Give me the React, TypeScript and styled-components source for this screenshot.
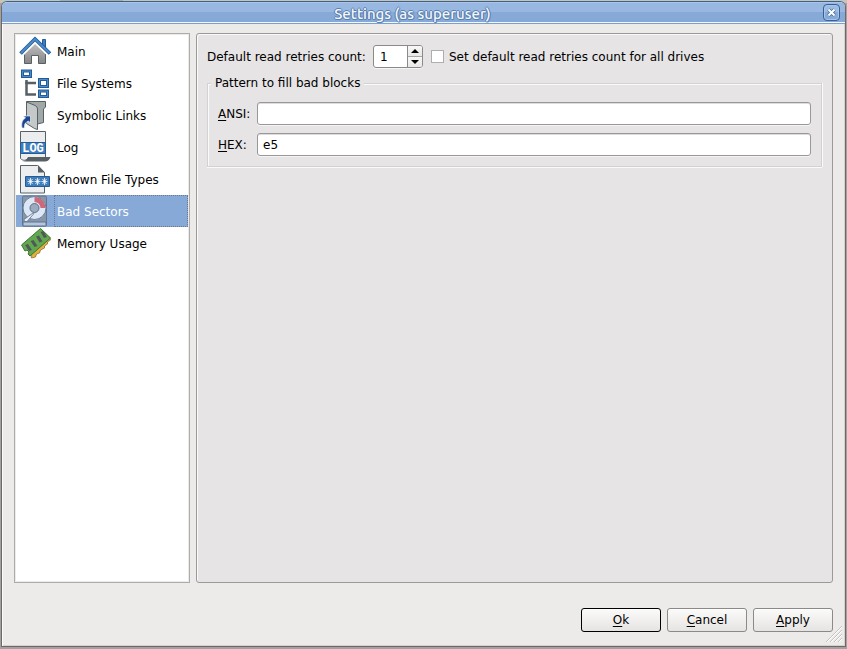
import React, { useState } from "react";
import styled, { createGlobalStyle } from "styled-components";

const GlobalStyle = createGlobalStyle`
  * { box-sizing: border-box; }
  body {
    margin: 0;
    background: #a3a2a1;
    color: #000;
    font: 12px/16px "DejaVu Sans", sans-serif;
  }
  button, input { font: inherit; color: inherit; }
`;

const Desktop = styled.div`
  display: flex;
  min-height: 100vh;
  padding: 1px 1px 2px;
  background: linear-gradient(90deg, #c4c6bb 0 60px, #a9aba6 60px 123px, #c4c6bb 123px) top / 100% 3px no-repeat, #a3a2a1;
`;

const Window = styled.div`
  position: relative;
  flex: 1;
  display: flex;
  flex-direction: column;
  min-width: 0;
  border: 1px solid #6b6a69;
  border-top-color: #3f5f86;
  border-radius: 6px 6px 0 0;
  background: #edebe9;
  box-shadow: inset 1px 0 #fbfbfb, inset -1px -1px #d4d2d0;
  overflow: hidden;
`;

const TitleBar = styled.header`
  display: flex;
  align-items: flex-start;
  height: 22px;
  padding: 2px 5px 0 0;
  background: linear-gradient(#a9c6ec 0 1px, #98b8e2 1px 10px, #86a9d8 10px 20px, #f4f7fb 20px 21px, #7b9fce 21px);
`;

const Title = styled.h1`
  flex: 1;
  margin: 0;
  text-align: center;
  font: 500 15px/20px Ubuntu, "Noto Sans", sans-serif;
  color: #f4f7fb;
  text-shadow: 1px 0 #587fae, -1px 0 #587fae, 0 1px #587fae, 0 -1px #587fae, 1px 1px #6d92c2;
`;

const CloseButton = styled.button`
  display: grid;
  place-items: center;
  width: 17px;
  height: 17px;
  padding: 0;
  border: 1px solid #385f8f;
  border-radius: 4px;
  background: linear-gradient(#9dbce4 50%, #86a9d8 50%);
  box-shadow: inset 0 0 0 1px #a9c5eb;
`;

const Content = styled.main`
  flex: 1;
  display: flex;
  gap: 6px;
  padding: 9px 12px 0;
`;

const CategoryList = styled.nav`
  flex: 0 0 176px;
  padding: 1px;
  border: 1px solid #aeacaa;
  background: #fff;
  box-shadow: inset 0 0 0 1px #edebe9;
`;

const Category = styled.button<{ $selected: boolean }>`
  display: flex;
  width: 100%;
  height: 32px;
  padding: 0;
  border: 0;
  text-align: left;
  background: ${(p) => (p.$selected ? "#86a9d8" : "transparent")};
  color: ${(p) => (p.$selected ? "#fff" : "#000")};
  outline: none;
`;

const CategoryName = styled.span<{ $selected: boolean }>`
  flex: 1;
  padding: 8px 2px 6px;
  border: 1px dotted ${(p) => (p.$selected ? "#6f7886" : "transparent")};
`;

const Icon = styled.svg`
  flex: none;
  width: 38px;
  height: 32px;
`;

const Panel = styled.section`
  flex: 1;
  min-width: 0;
  padding: 11px 10px;
  border: 1px solid #9c999a;
  border-radius: 3px;
  background: #e6e4e5;
  box-shadow: inset 1px 1px #fbfafa;
`;

const RetryRow = styled.div`
  display: flex;
  align-items: center;
`;

const SpinBox = styled.div`
  display: flex;
  width: 50px;
  height: 23px;
  margin: 0 8px 0 7px;
  border: 1px solid #8c8a89;
  border-radius: 3px;
  background: #fff;
  box-shadow: 0 1px #f6f5f5;
  overflow: hidden;
`;

const SpinInput = styled.input`
  width: 33px;
  padding: 0 6px;
  border: 0;
  outline: none;
  background: transparent;
  appearance: textfield;
  &::-webkit-inner-spin-button { appearance: none; margin: 0; }
`;

const Steppers = styled.div`
  flex: 1;
  display: flex;
  flex-direction: column;
  border-left: 1px solid #8c8a89;
`;

const Stepper = styled.button`
  flex: 1;
  display: grid;
  place-items: center;
  padding: 0;
  border: 0;
  background: linear-gradient(#f8f8f7, #e9e8e7);
  & + & { border-top: 1px solid #a9a7a6; }
`;

const CheckBox = styled.input`
  appearance: none;
  width: 13px;
  height: 13px;
  margin: 0 5px 0 0;
  border: 1px solid #b0aead;
  background: #fff;
  &:checked { background: #fff linear-gradient(#333, #333) center / 7px 7px no-repeat; }
`;

const Group = styled.fieldset`
  min-width: 0;
  margin: 7px 0 0;
  padding: 11px 10px 10px;
  border: 1px solid #d3d1d2;
  box-shadow: inset 1px 1px #fbfafa, 0 1px #fbfafa, 1px 0 #fbfafa;
`;

const Legend = styled.legend`
  margin-left: -7px;
  padding: 0 4px;
  background: #e6e4e5;
`;

const Fields = styled.div`
  display: grid;
  grid-template-columns: 39px 1fr;
  row-gap: 8px;
  align-items: center;
`;

const TextInput = styled.input`
  width: 100%;
  min-width: 0;
  height: 23px;
  padding: 0 5px;
  border: 1px solid #9a9897;
  border-radius: 3px;
  outline: none;
  background: #fff;
  box-shadow: 0 1px #f6f5f5, inset 0 1px #dedcdc;
`;

const Mnemonic = styled.u`
  text-underline-offset: 2px;
  text-decoration-thickness: 1px;
  text-decoration-skip-ink: none;
`;

const Footer = styled.footer`
  display: flex;
  justify-content: flex-end;
  gap: 6px;
  padding: 25px 12px 14px;
`;

const DialogButton = styled.button<{ $primary?: boolean }>`
  width: 80px;
  height: 24px;
  padding: 0;
  border: 1px solid ${(p) => (p.$primary ? "#000" : "#8c8a88")};
  border-radius: 3px;
  background: linear-gradient(#fbfbfa, #e6e4e2);
  box-shadow: inset 0 1px #fff;
`;

const Grip = styled.svg`
  position: absolute;
  right: 2px;
  bottom: 3px;
  width: 18px;
  height: 18px;
  pointer-events: none;
`;

const BLUE = "#3f7ebd";
const EDGE = "#245b96";
const SLATE = "#566065";

function HouseIcon() {
  return (
    <Icon viewBox="0 0 38 32" aria-hidden="true">
      <defs>
        <linearGradient id="wall" x1="0" y1="0" x2="0" y2="1">
          <stop offset="0" stopColor="#c2c2c2" />
          <stop offset="1" stopColor="#858585" />
        </linearGradient>
      </defs>
      <path d="M26.500 13V4.500h3V16z" fill={BLUE} stroke={EDGE} />
      <path d="M8.500 18 19 7.500 29.500 18v10.500h-7v-8h-7v8h-7z" fill="url(#wall)" stroke={SLATE} />
      <path d="M5 19.500 19 5.500 33.500 19.500" fill="none" stroke="#fff" strokeWidth="5" />
      <path d="M4.500 18.500 19 4 34 18.500" fill="none" stroke={EDGE} strokeWidth="3.600" />
      <path d="M5 18 19 4 33.500 18" fill="none" stroke="#4a8ccc" strokeWidth="1.800" />
    </Icon>
  );
}

function TreeIcon() {
  return (
    <Icon viewBox="0 0 38 32" aria-hidden="true">
      <path d="M20 16h-9.500v11.500H20" fill="none" stroke={SLATE} strokeWidth="2.500" />
      <path d="M10.500 13v4" stroke={SLATE} strokeWidth="2.500" />
      <g fill="#fff" stroke={EDGE} strokeWidth="3">
        <path d="M6.500 4h8v5.500h-8zM23.500 12.500h8v7h-8zM23.500 24h8v5.500h-8z" />
      </g>
      <g fill="none" stroke="#4a8ccc">
        <path d="M6.500 4h8v5.500h-8zM23.500 12.500h8v7h-8zM23.500 24h8v5.500h-8z" />
      </g>
    </Icon>
  );
}

function LinkIcon() {
  return (
    <Icon viewBox="0 0 38 32" aria-hidden="true">
      <path d="M10.500 2.500h19V8L27.500 10v13.500l-6 1.500z" fill="#a0a8a8" stroke={SLATE} />
      <path d="m10.500 3 7.500 3c3 1.500 3.500 2 3.500 5v19.500l-3-1-8-5z" fill="#c5c8c8" stroke={SLATE} />
      <path d="M6 29c-1-6 1-8.500 3.500-10L7.500 17h7v7l-2-2C9.500 23.500 8 25 8.500 29z" fill="#1d4690" stroke="#e9eef8" strokeWidth=".7" />
    </Icon>
  );
}

function LogIcon() {
  return (
    <Icon viewBox="0 0 38 32" aria-hidden="true">
      <path d="M4.500.5h25v26h-17c-2 3-5 4-8 1z" fill="#ebedee" stroke={SLATE} />
      <path d="M4.500 11.500h25v11h-25z" fill={BLUE} stroke={EDGE} />
      <path d="M12 26h22.500c-1 2.500-2 4-5 4.500H6c3 0 5-2 6-4.500z" fill={SLATE} />
      <text x="17" y="21" textAnchor="middle" fill="#fff" fontFamily="'Liberation Mono', monospace" fontWeight="700" fontSize="12">LOG</text>
    </Icon>
  );
}

function FileTypeIcon() {
  return (
    <Icon viewBox="0 0 38 32" aria-hidden="true">
      <path d="M4.500 2.500h17l7 7v20.500h-24z" fill="#ebedee" stroke={SLATE} />
      <path d="M22 2v7.500h7z" fill={SLATE} />
      <path d="M9.500 13.500h24v10h-24z" fill={BLUE} stroke={EDGE} />
      <path d="M14.500 15v7M11.500 18.500h6M12.500 16l4 5M16.500 16l-4 5M21.500 15v7M18.500 18.500h6M19.500 16l4 5M23.500 16l-4 5M28.500 15v7M25.500 18.500h6M26.500 16l4 5M30.500 16l-4 5" stroke="#fff" strokeWidth=".8" />
    </Icon>
  );
}

function DiskIcon() {
  return (
    <Icon viewBox="0 0 38 32" aria-hidden="true">
      <rect x="6.500" y="1" width="24" height="30" rx="1.500" fill="#8797a9" stroke="#61758e" />
      <path d="M7 27h23v4H7z" fill="#b4c6de" stroke="#61758e" />
      <circle cx="18.500" cy="13" r="11.500" fill="#dce7f5" stroke="#6b7f99" />
      <path d="M18.500 13V2a11 11 0 0 1 11 11z" fill="#cc6878" />
      <circle cx="18.500" cy="13" r="6" fill="#dce7f5" />
      <circle cx="18.500" cy="13" r="4.500" fill="#9baabd" stroke="#5c708a" />
      <path d="m17 18-9 6.500.5 2H11l7-8z" fill="#e9f0fa" stroke="#5c708a" strokeWidth=".8" />
    </Icon>
  );
}

function MemoryIcon() {
  return (
    <Icon viewBox="0 0 38 32" aria-hidden="true">
      <path d="m14.500 26 19-16 1 3-3 2v2l-3 2v2l-4 2-1 3-3 1-1 3-4 1z" fill="#e6ae3e" stroke="#7e642a" strokeWidth=".7" />
      <path d="m5.500 18 19-16.500 10 9.500-20.500 18-2-2 1-2-2-2-2 1z" fill="#63a850" stroke="#38752f" />
      <path d="m9 18 3-1 4 6-3 1zM14.500 14l3-1 4 6-3 1zM20 9.500l3-1 3.500 6-3 1zM24.500 5l3-1 3.500 6-3 1z" fill="#4e5a57" />
    </Icon>
  );
}

const categories = [
  { name: "Main", Glyph: HouseIcon },
  { name: "File Systems", Glyph: TreeIcon },
  { name: "Symbolic Links", Glyph: LinkIcon },
  { name: "Log", Glyph: LogIcon },
  { name: "Known File Types", Glyph: FileTypeIcon },
  { name: "Bad Sectors", Glyph: DiskIcon },
  { name: "Memory Usage", Glyph: MemoryIcon },
];

export default function App() {
  const [selected, setSelected] = useState("Bad Sectors");
  const [retries, setRetries] = useState(1);

  return (
    <Desktop>
      <GlobalStyle />
      <Window role="dialog" aria-labelledby="title">
        <TitleBar>
          <Title id="title">Settings (as superuser)</Title>
          <CloseButton aria-label="Close">
            <svg width="9" height="9" viewBox="0 0 9 9" aria-hidden="true">
              <path d="m1.500 1.500 6 6m0-6-6 6" stroke="#4a709e" strokeWidth="3.600" />
              <path d="m1.500 1.500 6 6m0-6-6 6" stroke="#fff" strokeWidth="2" />
            </svg>
          </CloseButton>
        </TitleBar>
        <Content>
          <CategoryList aria-label="Categories">
            {categories.map(({ name, Glyph }) => (
              <Category
                key={name}
                $selected={name === selected}
                aria-current={name === selected}
                onClick={() => setSelected(name)}
              >
                <Glyph />
                <CategoryName $selected={name === selected}>{name}</CategoryName>
              </Category>
            ))}
          </CategoryList>
          <Panel>
            <RetryRow>
              <label htmlFor="retries">Default read retries count:</label>
              <SpinBox>
                <SpinInput
                  id="retries"
                  type="number"
                  min={0}
                  value={retries}
                  onChange={(e) => setRetries(Number(e.target.value))}
                />
                <Steppers>
                  <Stepper aria-label="Increase" onClick={() => setRetries(retries + 1)}>
                    <svg width="8" height="4" viewBox="0 0 8 4" aria-hidden="true"><path d="M0 4l4-4 4 4z" /></svg>
                  </Stepper>
                  <Stepper aria-label="Decrease" onClick={() => setRetries(Math.max(0, retries - 1))}>
                    <svg width="8" height="4" viewBox="0 0 8 4" aria-hidden="true"><path d="M0 0l4 4 4-4z" /></svg>
                  </Stepper>
                </Steppers>
              </SpinBox>
              <CheckBox id="all-drives" type="checkbox" />
              <label htmlFor="all-drives">Set default read retries count for all drives</label>
            </RetryRow>
            <Group>
              <Legend>Pattern to fill bad blocks</Legend>
              <Fields>
                <label htmlFor="ansi"><Mnemonic>A</Mnemonic>NSI:</label>
                <TextInput id="ansi" type="text" />
                <label htmlFor="hex"><Mnemonic>H</Mnemonic>EX:</label>
                <TextInput id="hex" type="text" defaultValue="e5" />
              </Fields>
            </Group>
          </Panel>
        </Content>
        <Footer>
          <DialogButton $primary><Mnemonic>O</Mnemonic>k</DialogButton>
          <DialogButton><Mnemonic>C</Mnemonic>ancel</DialogButton>
          <DialogButton><Mnemonic>A</Mnemonic>pply</DialogButton>
        </Footer>
        <Grip viewBox="0 0 18 18" aria-hidden="true">
          <path d="M1 17 17 1M5 17 17 5M9 17l8-8M13 17l4-4" stroke="#c4c2c0" />
          <path d="M2 17 17 2M6 17 17 6M10 17l7-7M14 17l3-3" stroke="#fff" />
        </Grip>
      </Window>
    </Desktop>
  );
}
